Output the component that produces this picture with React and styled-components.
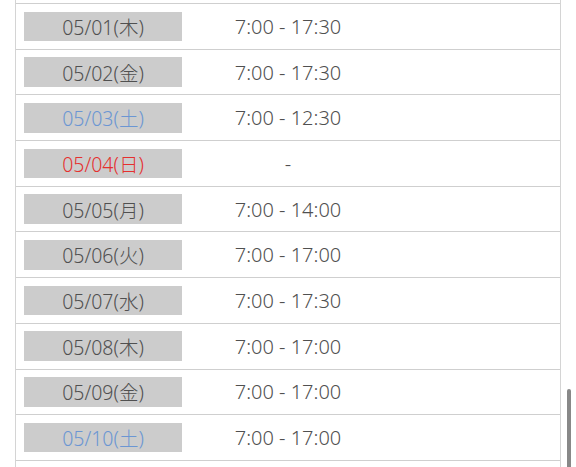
import React from 'react';
import styled, { createGlobalStyle } from 'styled-components';

const GlobalStyle = createGlobalStyle`
  html, body {
    margin: 0;
    padding: 0;
    background: #fff;
    overflow: hidden;
  }
  body {
    font-family: 'Noto Sans', 'Noto Sans CJK JP', sans-serif;
  }
`;

const Page = styled.div`
  height: 467px;
  overflow: hidden;
  padding: 0 15px;
  position: relative;
`;

const Table = styled.div`
  border-left: 1px solid #d4d4d4;
  border-right: 1px solid #d4d4d4;
  padding-top: 3px;
  height: 100%;
  box-sizing: border-box;
`;

const Row = styled.div`
  display: grid;
  grid-template-columns: 174px 196px 1fr;
  align-items: center;
  height: 44.7px;
  border-top: 1px solid #cfcfcf;
`;

const DateCell = styled.div`
  padding: 0 8px;
`;

const DateBox = styled.div`
  height: 29.6px;
  background: #cccccc;
  display: flex;
  align-items: center;
  justify-content: center;
  font-size: 19.5px;
  font-weight: 300;
  color: ${p => (p.$day === 'sat' ? '#6b96d3' : p.$day === 'sun' ? '#e5302f' : '#505050')};
`;

const TimeCell = styled.div`
  text-align: center;
  font-size: 20px;
  font-weight: 300;
  color: #505050;
`;

const Scrollbar = styled.div`
  position: absolute;
  right: 5px;
  top: 389px;
  width: 4px;
  height: 120px;
  border-radius: 2px;
  background: #888888;
`;

const rows = [
  ['05/01(木)', '7:00 - 17:30'],
  ['05/02(金)', '7:00 - 17:30'],
  ['05/03(土)', '7:00 - 12:30', 'sat'],
  ['05/04(日)', '-', 'sun'],
  ['05/05(月)', '7:00 - 14:00'],
  ['05/06(火)', '7:00 - 17:00'],
  ['05/07(水)', '7:00 - 17:30'],
  ['05/08(木)', '7:00 - 17:00'],
  ['05/09(金)', '7:00 - 17:00'],
  ['05/10(土)', '7:00 - 17:00', 'sat'],
];

export default function App() {
  return (
    <>
      <GlobalStyle />
      <Page>
        <Table>
          {rows.map(([date, time, day]) => (
            <Row key={date}>
              <DateCell>
                <DateBox $day={day}>{date}</DateBox>
              </DateCell>
              <TimeCell>{time}</TimeCell>
              <div />
            </Row>
          ))}
          <Row />
        </Table>
        <Scrollbar />
      </Page>
    </>
  );
}
